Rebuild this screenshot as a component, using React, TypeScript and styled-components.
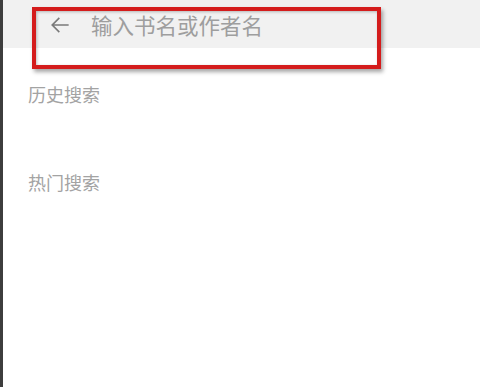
import React from "react";
import styled, { createGlobalStyle } from "styled-components";

const GlobalStyle = createGlobalStyle`
  html, body {
    margin: 0;
    padding: 0;
    background: #ffffff;
    font-family: "Noto Sans CJK SC", "Noto Sans", sans-serif;
  }
`;

const Screen = styled.div`
  position: relative;
  width: 480px;
  height: 387px;
  box-sizing: border-box;
  border-left: 3px solid #3d3d3d;
  background: #ffffff;
  overflow: hidden;
`;

const SearchBar = styled.div`
  display: flex;
  align-items: center;
  height: 48px;
  padding-left: 44px;
  background: #f1f1f1;
  box-sizing: border-box;
`;

const BackButton = styled.button`
  display: flex;
  align-items: center;
  justify-content: center;
  padding: 0;
  margin: 2px 18px 0 0;
  border: none;
  background: none;
  color: #7a7a7a;
`;

const SearchInput = styled.input`
  flex: 1;
  border: none;
  outline: none;
  background: transparent;
  font-family: inherit;
  font-size: 21.5px;
  color: #333;
  padding: 0;
  margin-top: 0;

  &::placeholder {
    color: #9e9e9e;
  }
`;

const Section = styled.section<{ gap: number }>`
  padding: ${(p) => p.gap}px 0 0 25px;
`;

const SectionTitle = styled.h3`
  margin: 0;
  font-size: 18px;
  font-weight: 400;
  line-height: 24px;
  color: #a3a3a3;
`;

const Highlight = styled.div`
  position: absolute;
  left: 29px;
  top: 7px;
  width: 349px;
  height: 62px;
  box-sizing: border-box;
  border: 4px solid #d41c1c;
  box-shadow: 2px 3px 4px rgba(0, 0, 0, 0.35), inset 1px 1px 3px rgba(0, 0, 0, 0.25);
  pointer-events: none;
`;

function ArrowLeftIcon() {
  return (
    <svg width="26" height="26" viewBox="0 0 24 24" fill="currentColor">
      <path d="M20 11.25H6.6l5.3-5.3L10.85 4.9 3.75 12l7.1 7.1 1.05-1.05-5.3-5.3H20v-1.5z" />
    </svg>
  );
}

export default function App() {
  return (
    <>
      <GlobalStyle />
      <Screen>
        <SearchBar>
          <BackButton aria-label="返回">
            <ArrowLeftIcon />
          </BackButton>
          <SearchInput placeholder="输入书名或作者名" />
        </SearchBar>
        <Section gap={34}>
          <SectionTitle>历史搜索</SectionTitle>
        </Section>
        <Section gap={64}>
          <SectionTitle>热门搜索</SectionTitle>
        </Section>
        <Highlight />
      </Screen>
    </>
  );
}
